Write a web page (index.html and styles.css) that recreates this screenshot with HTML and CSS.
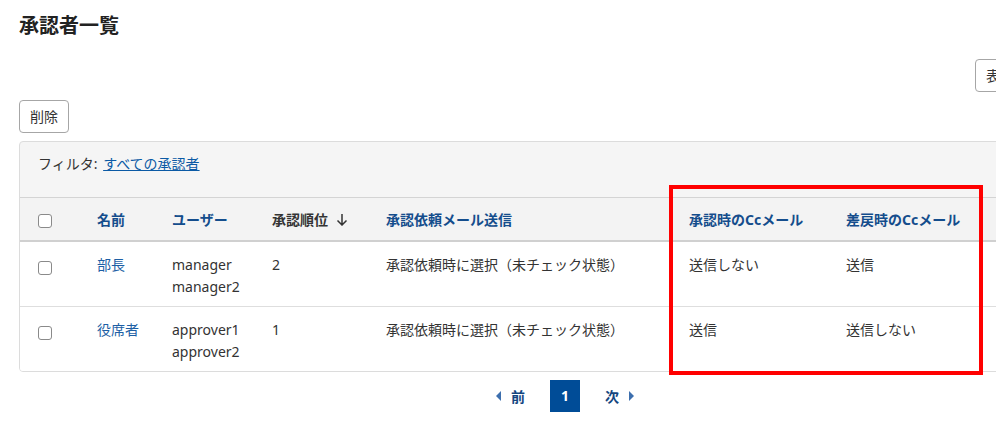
FILE: index.html
```html
<!DOCTYPE html>
<html>
<head>
    <title>承認者一覧</title>
    <link rel="stylesheet" href="styles.css">
</head>
<body>
    <div class="page">
        <h1 class="title">承認者一覧</h1>

        <div class="toolbar-right">
            <button class="btn">表示設定</button>
        </div>

        <div class="toolbar-left">
            <button class="btn">削除</button>
        </div>

        <div class="panel">
            <div class="filter">
                フィルタ: <a href="#" class="filter-link">すべての承認者</a>
            </div>

            <table class="list">
                <colgroup>
                    <col style="width: 65px">
                    <col style="width: 75px">
                    <col style="width: 100px">
                    <col style="width: 114px">
                    <col style="width: 303px">
                    <col style="width: 157px">
                    <col style="width: 157px">
                    <col>
                </colgroup>
                <thead>
                    <tr>
                        <th class="check-cell"><span class="check"></span></th>
                        <th><a href="#">名前</a></th>
                        <th><a href="#">ユーザー</a></th>
                        <th class="sorted">承認順位
                            <svg class="sort-arrow" width="12" height="13" viewBox="0 0 12 13">
                                <path d="M6 1 V11.5 M1.5 7.5 L6 12 L10.5 7.5" fill="none" stroke="#333" stroke-width="1.5"/>
                            </svg>
                        </th>
                        <th><a href="#">承認依頼メール送信</a></th>
                        <th><a href="#">承認時のCcメール</a></th>
                        <th><a href="#">差戻時のCcメール</a></th>
                        <th></th>
                    </tr>
                </thead>
                <tbody>
                    <tr>
                        <td class="check-cell"><span class="check"></span></td>
                        <td><a href="#" class="name-link">部長</a></td>
                        <td>manager<br>manager2</td>
                        <td>2</td>
                        <td>承認依頼時に選択（未チェック状態）</td>
                        <td>送信しない</td>
                        <td>送信</td>
                        <td></td>
                    </tr>
                    <tr>
                        <td class="check-cell"><span class="check"></span></td>
                        <td><a href="#" class="name-link">役席者</a></td>
                        <td>approver1<br>approver2</td>
                        <td>1</td>
                        <td>承認依頼時に選択（未チェック状態）</td>
                        <td>送信</td>
                        <td>送信しない</td>
                        <td></td>
                    </tr>
                </tbody>
            </table>
        </div>

        <div class="pager">
            <a href="#" class="pager-link"><span class="tri tri-left"></span>前</a>
            <span class="pager-current">1</span>
            <a href="#" class="pager-link">次<span class="tri tri-right"></span></a>
        </div>

        <div class="highlight"></div>
    </div>
</body>
</html>
```

FILE: styles.css
```css
body {
    margin: 0;
    background-color: #fff;
    font-family: "Noto Sans", "Noto Sans CJK JP", sans-serif;
    font-size: 14px;
    color: #333;
    overflow: hidden;
}

.page {
    position: relative;
    width: 1080px;
    padding: 0 0 0 19px;
}

.title {
    font-size: 20px;
    font-weight: bold;
    color: #222;
    margin: 0;
    padding-top: 12px;
    line-height: 28px;
    height: 47px;
}

.btn {
    font-family: "Noto Sans", "Noto Sans CJK JP", sans-serif;
    font-size: 14px;
    color: #333;
    background-color: #fff;
    border: 1px solid #a6a6a6;
    border-radius: 4px;
    height: 33px;
    padding: 0 10px;
    line-height: 31px;
}

.toolbar-right {
    display: flex;
    padding-left: 956px;
    height: 41px;
}

.toolbar-left {
    height: 41px;
}

.panel {
    width: 1040px;
    background-color: #f5f5f5;
    border: 1px solid #dcdcdc;
    border-radius: 4px;
    overflow: hidden;
}

.filter {
    height: 55px;
    padding-left: 18px;
    line-height: 44px;
    color: #333;
}

.filter-link {
    color: #0b5aa5;
    margin-left: 2px;
}

.list {
    width: 100%;
    border-collapse: collapse;
    table-layout: fixed;
}

.list th {
    height: 42px;
    padding: 0 12px;
    text-align: left;
    font-weight: bold;
    background-color: #f3f3f3;
    border-top: 1px solid #d4d4d4;
    border-bottom: 2px solid #d0d0d0;
    white-space: nowrap;
}

.list th a {
    color: #144d8c;
    text-decoration: none;
}

.list th.sorted {
    color: #333;
}

.sort-arrow {
    vertical-align: -1px;
    margin-left: 4px;
}

.list td {
    background-color: #fff;
    vertical-align: top;
    padding: 12px 12px 8px;
    line-height: 22px;
    border-bottom: 1px solid #dedede;
    white-space: nowrap;
}

.list tbody tr:last-child td {
    border-bottom: none;
}

.list .check-cell {
    padding-left: 18px;
}

.list td.check-cell {
    padding-top: 14px;
}

.check {
    display: inline-block;
    width: 12px;
    height: 12px;
    border: 1px solid #8a8a8a;
    border-radius: 3px;
    background-color: #fff;
    vertical-align: middle;
}

.name-link {
    color: #1d5fa5;
    text-decoration: none;
}

.pager {
    display: flex;
    align-items: center;
    padding-left: 465px;
    margin-top: 7px;
    height: 33px;
}

.pager-link {
    display: flex;
    align-items: center;
    gap: 10px;
    color: #14467f;
    font-weight: bold;
    text-decoration: none;
    padding: 0 12px;
}

.pager-current {
    width: 30px;
    height: 32px;
    line-height: 32px;
    text-align: center;
    background-color: #004c97;
    color: #fff;
    font-weight: bold;
    margin: 0 13px;
}

.tri {
    display: inline-block;
    width: 0;
    height: 0;
    border-top: 5px solid transparent;
    border-bottom: 5px solid transparent;
}

.tri-left {
    border-right: 5px solid #3d6fae;
}

.tri-right {
    border-left: 5px solid #3d6fae;
}

.highlight {
    position: absolute;
    left: 669px;
    top: 185px;
    width: 306px;
    height: 182px;
    border: 4px solid #f00;
}
```
